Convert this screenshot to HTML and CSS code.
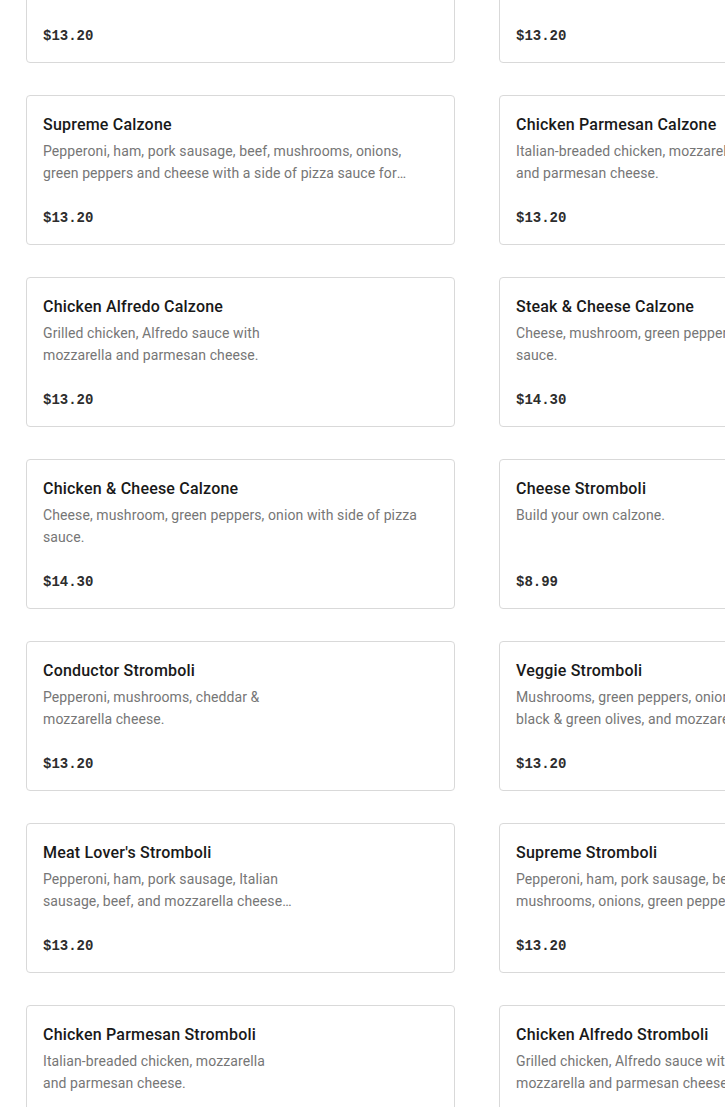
FILE: index.html
```html
<!DOCTYPE html>
<html lang="en">
<head>
<meta charset="utf-8">
<title>Menu</title>
<link rel="stylesheet" href="styles.css">
</head>
<body>
<main class="menu">
  <div class="grid">
    <article class="card thumb">
      <h3 class="title">Meat Lover's Calzone</h3>
      <p class="desc">Pepperoni, ham, pork sausage, Italian sausage, beef, and mozzarella cheese with a side of pizza sauce.</p>
      <div class="price">$13.20</div>
    </article>
    <article class="card thumb">
      <h3 class="title">Veggie Calzone</h3>
      <p class="desc">Mushrooms, green peppers, onions, black &amp; green olives, and mozzarella cheese.</p>
      <div class="price">$13.20</div>
    </article>

    <article class="card">
      <h3 class="title">Supreme Calzone</h3>
      <p class="desc">Pepperoni, ham, pork sausage, beef, mushrooms, onions, green peppers and cheese with a side of pizza sauce for dipping.</p>
      <div class="price">$13.20</div>
    </article>
    <article class="card thumb">
      <h3 class="title">Chicken Parmesan Calzone</h3>
      <p class="desc">Italian-breaded chicken, mozzarella and&nbsp;parmesan cheese.</p>
      <div class="price">$13.20</div>
    </article>

    <article class="card thumb">
      <h3 class="title">Chicken Alfredo Calzone</h3>
      <p class="desc">Grilled chicken, Alfredo sauce with mozzarella and parmesan cheese.</p>
      <div class="price">$13.20</div>
    </article>
    <article class="card">
      <h3 class="title">Steak &amp; Cheese Calzone</h3>
      <p class="desc">Cheese, mushroom, green peppers, onion with side of pizza sauce.</p>
      <div class="price">$14.30</div>
    </article>

    <article class="card">
      <h3 class="title">Chicken &amp; Cheese Calzone</h3>
      <p class="desc">Cheese, mushroom, green peppers, onion with side of pizza sauce.</p>
      <div class="price">$14.30</div>
    </article>
    <article class="card">
      <h3 class="title">Cheese Stromboli</h3>
      <p class="desc">Build your own calzone.</p>
      <div class="price">$8.99</div>
    </article>

    <article class="card thumb">
      <h3 class="title">Conductor Stromboli</h3>
      <p class="desc">Pepperoni, mushrooms, cheddar &amp; mozzarella cheese.</p>
      <div class="price">$13.20</div>
    </article>
    <article class="card thumb">
      <h3 class="title">Veggie Stromboli</h3>
      <p class="desc">Mushrooms, green peppers, onions, black &amp; green olives, and mozzarella cheese.</p>
      <div class="price">$13.20</div>
    </article>

    <article class="card thumb">
      <h3 class="title">Meat Lover's Stromboli</h3>
      <p class="desc">Pepperoni, ham, pork sausage, Italian sausage, beef, and mozzarella cheese with a side of pizza sauce.</p>
      <div class="price">$13.20</div>
    </article>
    <article class="card thumb">
      <h3 class="title">Supreme Stromboli</h3>
      <p class="desc">Pepperoni, ham, pork sausage, beef, mushrooms, onions, green peppers and cheese with a side of pizza sauce.</p>
      <div class="price">$13.20</div>
    </article>

    <article class="card thumb">
      <h3 class="title">Chicken Parmesan Stromboli</h3>
      <p class="desc">Italian-breaded chicken, mozzarella and&nbsp;parmesan cheese.</p>
      <div class="price">$13.20</div>
    </article>
    <article class="card thumb">
      <h3 class="title">Chicken Alfredo Stromboli</h3>
      <p class="desc">Grilled chicken, Alfredo sauce with mozzarella and parmesan cheese.</p>
      <div class="price">$13.20</div>
    </article>
  </div>
</main>
</body>
</html>
```

FILE: styles.css
```css
html, body {
  margin: 0;
  padding: 0;
  overflow: hidden;
  background: #ffffff;
}

body {
  font-family: "Roboto", "Liberation Sans", sans-serif;
  color: #191919;
}

.menu {
  padding-left: 26px;
  margin-top: -87px;
}

.grid {
  display: grid;
  grid-template-columns: 429px 429px;
  column-gap: 44px;
  row-gap: 32px;
  width: 902px;
}

.card {
  box-sizing: border-box;
  height: 150px;
  border: 1px solid #d9d9d9;
  border-radius: 4px;
  padding: 17px 30px 13px 16px;
  display: flex;
  flex-direction: column;
  background: #fff;
}

.card > * {
  flex-shrink: 0;
}

.title {
  margin: 0;
  font-size: 16px;
  line-height: 24px;
  font-weight: 500;
  letter-spacing: 0.2px;
  color: #191919;
  white-space: nowrap;
}

.desc {
  margin: 3px 0 0;
  font-size: 14px;
  line-height: 22px;
  height: 44px;
  letter-spacing: 0.1px;
  color: #767676;
  display: -webkit-box;
  -webkit-box-orient: vertical;
  -webkit-line-clamp: 2;
  overflow: hidden;
}

.thumb .desc {
  max-width: 252px;
}

.price {
  margin-top: 22px;
  font-family: "Liberation Mono", "DejaVu Sans Mono", monospace;
  font-weight: 700;
  font-size: 14px;
  line-height: 24px;
  color: #2d2d2d;
}
```
